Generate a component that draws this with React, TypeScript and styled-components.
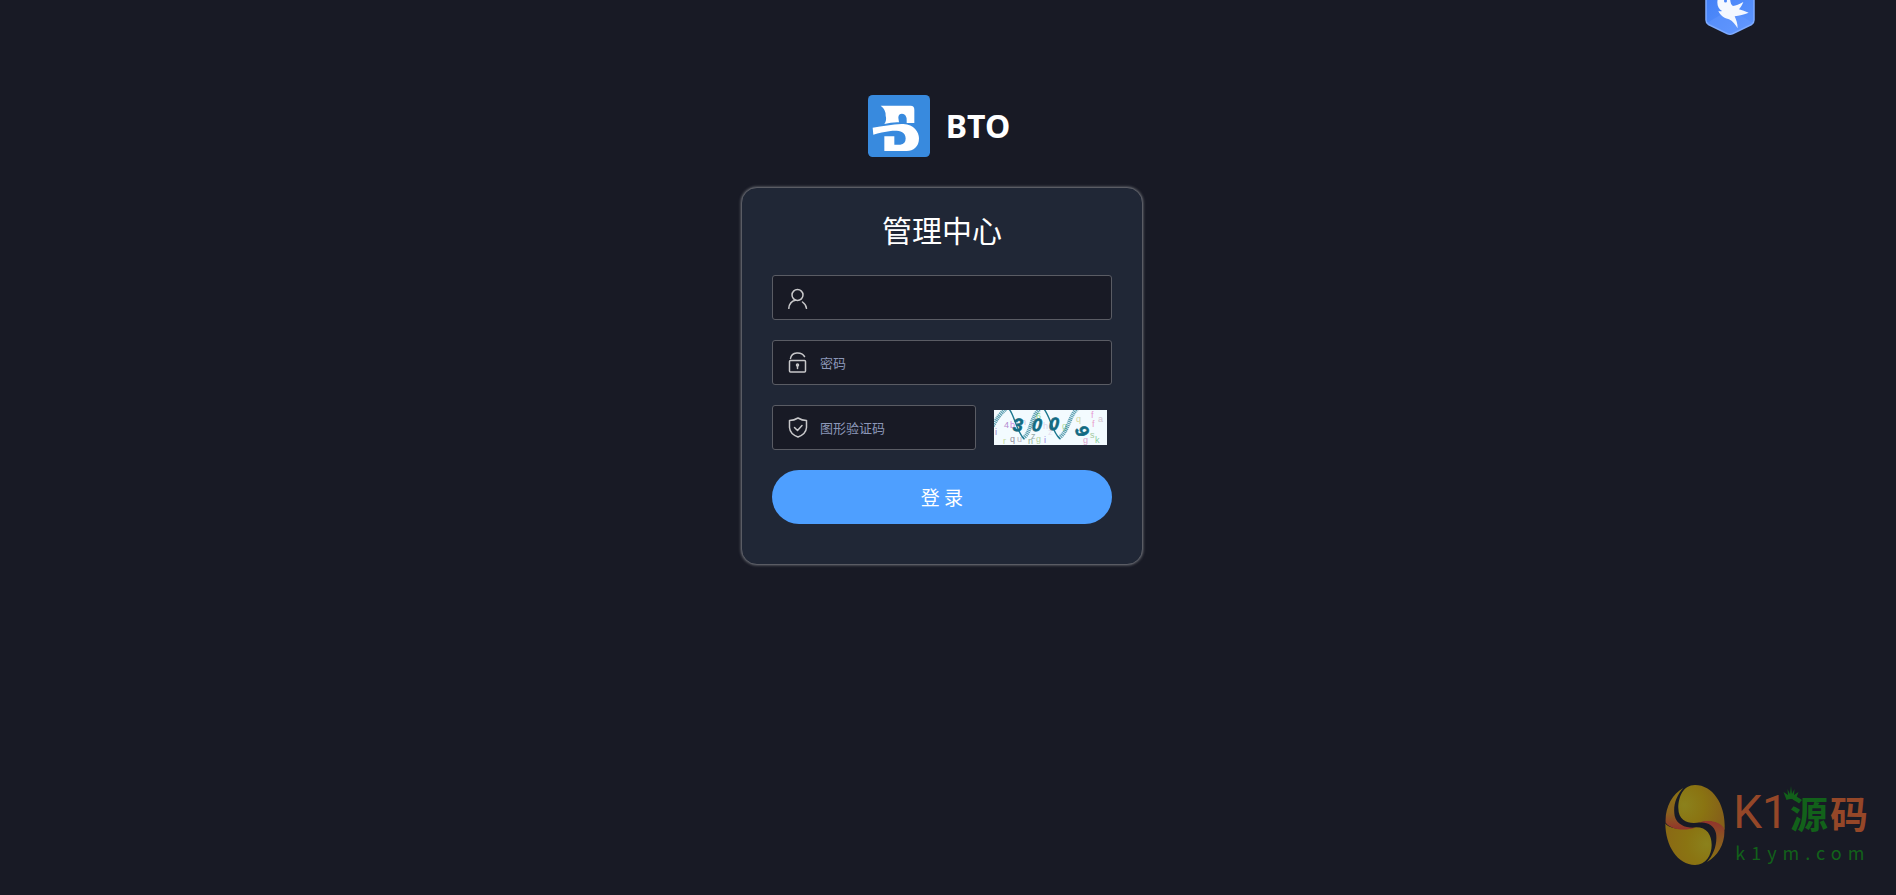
import React from "react";
import styled, { createGlobalStyle } from "styled-components";

const cjk = `"Noto Sans CJK SC", sans-serif`;

const GlobalStyle = createGlobalStyle`
  *, *::before, *::after { box-sizing: border-box; }
  body { margin: 0; background: #181a25; color: #fff; font-family: "Noto Sans", ${cjk}; }
`;

const Page = styled.main`
  position: relative;
  min-height: 100vh;
  overflow: hidden;
  display: flex;
  flex-direction: column;
  align-items: center;
  gap: 30px;
  padding: 95px 12px 40px 0;
`;

const Brand = styled.header`
  display: flex;
  align-items: center;
  justify-content: center;
  gap: 16px;
  height: 62px;
  padding-right: 6px;
`;

const BrandLogo = styled.svg`
  width: 62px;
  height: 62px;
  flex: none;
`;

const BrandName = styled.span`
  font: 700 32px/62px "Noto Sans", ${cjk};
`;

const Card = styled.form`
  width: 402px;
  max-width: 100%;
  padding: 20px 30px 40px;
  background: #202736;
  border: 1px solid #5a5c64;
  border-radius: 16px;
  box-shadow: 0 0 3px #7b7d83;
  display: flex;
  flex-direction: column;
  gap: 20px;
`;

const Title = styled.h1`
  margin: 0 0 5px;
  text-align: center;
  font: 400 30px/42px ${cjk};
`;

const Row = styled.div`
  display: flex;
  align-items: center;
  gap: 18px;
  padding-right: 5px;
`;

const Field = styled.label`
  flex: 1;
  min-width: 0;
  display: flex;
  align-items: center;
  gap: 12px;
  min-height: 45px;
  padding: 0 15px;
  background: #181a25;
  border: 1px solid #5a5c64;
  border-radius: 3px;
`;

const FieldIcon = styled.svg`
  width: 20px;
  height: 22px;
  flex: none;
  fill: none;
  stroke: #c8c8ca;
  stroke-width: 1.5;
  stroke-linecap: round;
  stroke-linejoin: round;
`;

const Input = styled.input`
  flex: 1;
  min-width: 0;
  height: 43px;
  padding: 0;
  border: 0;
  outline: 0;
  background: transparent;
  color: #fff;
  font: 400 13px/20px ${cjk};
  &::placeholder { color: #8b97b8; opacity: 1; }
`;

const CaptchaButton = styled.button`
  display: block;
  flex: none;
  width: 113px;
  height: 35px;
  padding: 0;
  border: 0;
  background: #f3fbff;
  cursor: pointer;
  svg { display: block; }
`;

const Submit = styled.button`
  height: 54px;
  border: 0;
  border-radius: 27px;
  background: #4e9fff;
  color: #fff;
  font: 400 19px/24px ${cjk};
  cursor: pointer;
`;

const Badge = styled.svg`
  position: absolute;
  top: -15px;
  right: 140px;
  width: 52px;
  height: 50px;
`;

const Watermark = styled.aside`
  position: absolute;
  right: 28px;
  bottom: 29px;
  display: flex;
  gap: 8px;
`;

const Egg = styled.svg`
  width: 60px;
  height: 82px;
`;

const MarkText = styled.div`
  position: relative;
  display: flex;
  flex-direction: column;
`;

const MarkTitle = styled.div`
  display: flex;
  align-items: center;
  height: 56px;
  gap: 2px;
  color: #954728;
`;

const Latin = styled.span`
  font: 400 46px/56px Roboto, sans-serif;
`;

const Han = styled.span<{ $green?: boolean }>`
  font: 700 38px/56px ${cjk};
  color: ${(p) => (p.$green ? "#12611a" : "inherit")};
`;

const Crown = styled.svg`
  position: absolute;
  left: 50px;
  top: 1px;
  width: 16px;
  height: 16px;
`;

const MarkUrl = styled.span`
  font: 400 18px/24px ${cjk};
  letter-spacing: 6px;
  margin-right: -6px;
  padding-left: 2px;
  color: #12611a;
`;

const noise: [number, number, string, string][] = [
  [10, 18, "4", "#b48ad0"], [16, 18, "b", "#cf8be0"], [27, 15, "n", "#d5c0d8"],
  [9, 34, "r", "#c6d99c"], [16, 32, "q", "#8f8a9a"], [23, 32, "u", "#b5aebc"],
  [37, 29, "z", "#93a7a5"], [34, 34, "n", "#8fae96"], [42, 32, "g", "#b5d3a0"],
  [50, 33, "i", "#9a7fe0"], [49, 19, "h", "#ddd3ea"], [54, 25, "z", "#e6dff0"],
  [42, 9, "6", "#8ed67e"], [68, 19, "g", "#a7d69a"], [82, 12, "q", "#d6d9a4"],
  [97, 8, "f", "#e79ad4"], [98, 17, "f", "#eaa0cb"], [104, 12, "a", "#d5c5d2"],
  [96, 28, "s", "#a4c99c"], [101, 33, "k", "#8ccf9e"], [89, 33, "g", "#dba6cf"],
  [1, 25, "i", "#9879c8"],
];

const digits: [number, number, string, number][] = [
  [24, 15, "3", 4], [43, 15, "0", 4], [60, 14, "0", 4], [88, 21, "9", 60],
];

function Captcha() {
  return (
    <svg width="113" height="35" viewBox="0 0 113 35" aria-hidden="true">
      <g fontFamily="Liberation Sans" fontSize="9">
        {noise.map(([x, y, c, f], i) => (
          <text key={i} x={x} y={y} fill={f}>{c}</text>
        ))}
      </g>
      <g fill="none" stroke="#1d7890">
        <path d="M15-1C20 4 22 20 30 29" strokeWidth="1.4" />
        <path d="M50-1C57 8 58 22 66 29" strokeWidth="1.4" />
        <g strokeWidth="4" strokeDasharray="1.2 .7" opacity=".7">
          <path d="M-1 16Q5 4 12-1M29 28C37 24 37 5 46-1M65 28C75 21 75 5 84-2" />
        </g>
      </g>
      <g
        fontFamily="Liberation Sans"
        fontSize="18"
        fontWeight="700"
        fontStyle="italic"
        fill="#126a82"
        stroke="#126a82"
        strokeWidth=".6"
        textAnchor="middle"
      >
        {digits.map(([x, y, c, r], i) => (
          <text key={i} x={x} y={y + 6} transform={`rotate(${r} ${x} ${y})`}>{c}</text>
        ))}
      </g>
    </svg>
  );
}

function EggLogo() {
  return (
    <Egg viewBox="17 12 180 246" aria-hidden="true">
      <defs>
        <radialGradient id="goldTop" gradientUnits="userSpaceOnUse" cx="75" cy="75" r="120">
          <stop offset="0" stopColor="#8b811c" />
          <stop offset=".5" stopColor="#8a7412" />
          <stop offset="1" stopColor="#856019" />
        </radialGradient>
        <radialGradient id="goldBottom" gradientUnits="userSpaceOnUse" cx="142" cy="192" r="120">
          <stop offset="0" stopColor="#8b811c" />
          <stop offset=".5" stopColor="#8a7412" />
          <stop offset="1" stopColor="#8a6a14" />
        </radialGradient>
        <linearGradient id="wingLeft" x1="0" y1="0" x2="0" y2="1">
          <stop offset="0" stopColor="#8a7412" />
          <stop offset=".6" stopColor="#8a611e" />
          <stop offset="1" stopColor="#93332c" />
        </linearGradient>
        <linearGradient id="wingRight" x1="0" y1="0" x2="0" y2="1">
          <stop offset="0" stopColor="#93332c" />
          <stop offset=".4" stopColor="#8a5422" />
          <stop offset="1" stopColor="#8a7412" />
        </linearGradient>
      </defs>
      <path d="M107 15C160 15 196 72 196 135V150C180 122 145 122 122 127C95 133 57 128 57 85C57 50 72 15 107 15Z" fill="url(#goldTop)" />
      <path d="M18 130C25 145 65 152 110 142C143 142 157 165 157 195C157 225 140 255 107 255C55 255 18 198 18 130Z" fill="url(#goldBottom)" />
      <path d="M72 24C38 42 16 85 19 128C38 152 80 152 108 143C80 145 52 134 46 108C40 75 52 46 72 24Z" fill="url(#wingLeft)" />
      <path d="M143 246C177 226 198 190 195 146C178 120 142 120 116 128C142 124 164 134 170 160C175 190 163 225 143 246Z" fill="url(#wingRight)" />
    </Egg>
  );
}

export default function App() {
  return (
    <>
      <GlobalStyle />
      <Page>
        <Badge viewBox="0 0 52 50" aria-hidden="true">
          <defs>
            <linearGradient id="hex" x1="0" y1="0" x2="1" y2="1">
              <stop offset="0" stopColor="#3f7df5" />
              <stop offset="1" stopColor="#5f97ff" />
            </linearGradient>
          </defs>
          <path
            d="M2 2H50V35Q50 38 47.500 39.500L29 48.500Q26 50 23 48.500L4.500 39.500Q2 38 2 35Z"
            fill="url(#hex)"
            stroke="#7eabff"
            strokeWidth="1.500"
          />
          <path d="M3 38L26 24L49 38L26 49Z" fill="#6d9dff" opacity=".35" />
          <path
            transform="translate(-14 15) scale(.3333)"
            d="M84-6C79 12 84 26 96 33C92 35 88 34 85 32C90 47 104 54 117 58C128 63 136 73 143 85C143 70 138 58 134 49C147 47 163 43 176 38C166 34 156 31 147 28C152 22 157 14 160 6C148 13 138 17 129 18C122 15 121 4 120-6Z"
            fill="#f4f8ff"
          />
          <circle cx="21.500" cy="16" r="1.500" fill="#4a86f7" />
        </Badge>
        <Brand>
          <BrandLogo viewBox="6 6 186 186" aria-hidden="true">
            <rect x="6" y="6" width="186" height="186" rx="14" fill="#388ade" />
            <path d="M44 38H134Q145 38 145 50V90H122V82Q122 62 108 62Q97 62 97 74L99 88Q78 87 55 93Q63 82 59 68Q60 50 44 38Z" fill="#fff" />
            <path d="M20 104C52 100 82 92 112 93C144 94 159 118 159 136C159 162 142 174 122 174H55V130H85V155H103Q119 154 119 136C118 114 96 112 74 114C56 116 38 121 22 125Z" fill="#fff" />
          </BrandLogo>
          <BrandName>BTO</BrandName>
        </Brand>
        <Card onSubmit={(e) => e.preventDefault()}>
          <Title>管理中心</Title>
          <Field>
            <FieldIcon viewBox="0 0 20 22">
              <circle cx="9.500" cy="8" r="5.500" />
              <path d="M.8 21.300C1.300 16.500 4 14 7.500 13.300M14.500 15Q18 17.500 18.500 21.300" />
            </FieldIcon>
            <Input type="text" aria-label="用户名" />
          </Field>
          <Field>
            <FieldIcon viewBox="0 0 20 22">
              <rect x="1.500" y="8.500" width="16" height="11.500" rx="1" />
              <path d="M2.500 6.500C3.500-.5 13.500-.5 16.500 4.500M9.500 14V16.500" />
              <circle cx="9.500" cy="13" r="1" />
            </FieldIcon>
            <Input type="password" placeholder="密码" aria-label="密码" />
          </Field>
          <Row>
            <Field>
              <FieldIcon viewBox="0 0 20 22">
                <path d="M10 1Q14 3.500 18.500 3.500V10.500Q18 17 10 20Q2 17 1.500 10.500V3.500Q6 3.500 10 1ZM6.500 10.500L9.500 13.500L14 8.500" />
              </FieldIcon>
              <Input type="text" placeholder="图形验证码" aria-label="图形验证码" />
            </Field>
            <CaptchaButton type="button" aria-label="图形验证码 3009">
              <Captcha />
            </CaptchaButton>
          </Row>
          <Submit type="submit">登 录</Submit>
        </Card>
        <Watermark>
          <EggLogo />
          <MarkText>
            <MarkTitle>
              <Latin>K1</Latin>
              <Han $green>源</Han>
              <Han>码</Han>
            </MarkTitle>
            <Crown viewBox="0 0 15 16" aria-hidden="true">
              <path d="M3 15L0 7L4.500 10L4 4L6.500 9L7.500 1L8.500 9L11 4L10.500 10L15 7L12 15Q7.500 13 3 15Z" fill="#12611a" />
            </Crown>
            <MarkUrl>k1ym.com</MarkUrl>
          </MarkText>
        </Watermark>
      </Page>
    </>
  );
}
